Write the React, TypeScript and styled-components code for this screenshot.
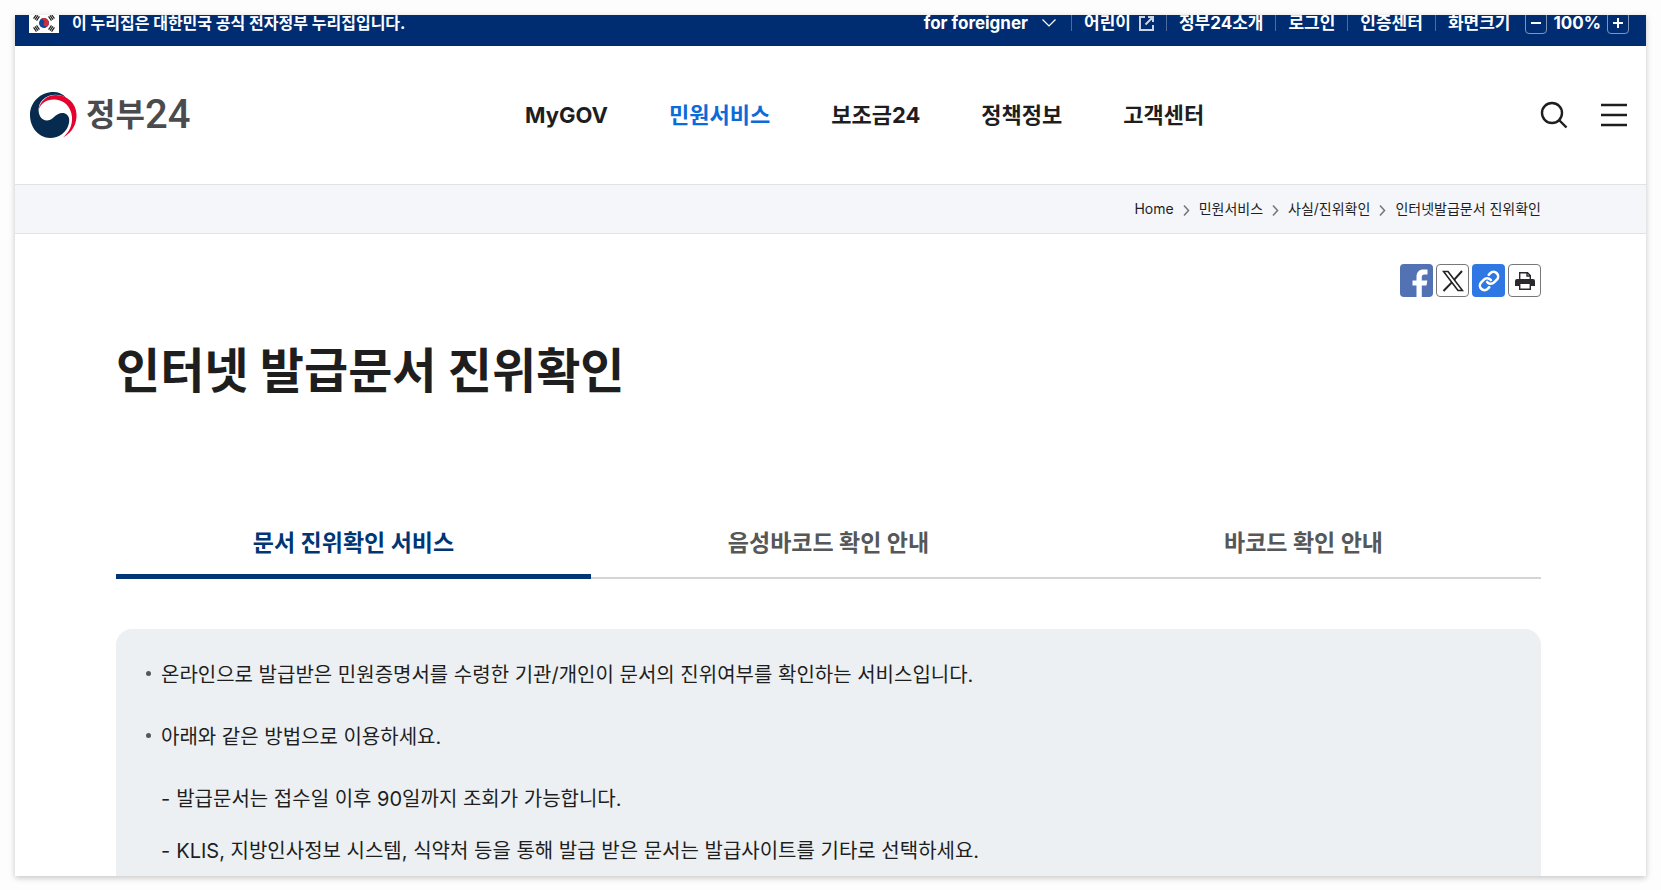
import React from "react";
import styled, { createGlobalStyle, css } from "styled-components";

const sans = `Inter, "Noto Sans CJK KR", sans-serif`;

const GlobalStyle = createGlobalStyle`
  *, *::before, *::after { box-sizing: border-box; }
  body { margin: 0; background: #fdfdfd; color: #1e1e1e; font-family: ${sans}; }
  a { color: inherit; text-decoration: none; }
  button { font: inherit; color: inherit; padding: 0; border: 0; background: none; cursor: pointer; }
  ul, ol, h1, p { margin: 0; padding: 0; list-style: none; }
  svg { display: block; flex: none; }
`;

const Page = styled.div`
  display: flex;
  min-height: 100vh;
  padding: 15px;
`;

const Frame = styled.div`
  flex: 1;
  min-width: 0;
  display: flex;
  flex-direction: column;
  background: #fff;
  box-shadow: 0 2px 6px rgba(0, 0, 0, 0.22);
`;

const TopBar = styled.div`
  height: 31px;
  overflow: hidden;
  display: flex;
  align-items: flex-end;
  background: #002d72;
  color: #fff;
`;

const TopBarInner = styled.div`
  flex: 1;
  height: 46px;
  flex-shrink: 0;
  padding: 0 17px 0 14px;
  display: flex;
  align-items: center;
  justify-content: space-between;
  font-size: 17px;
  line-height: 24px;
  font-weight: 700;
  white-space: nowrap;
`;

const Notice = styled.p`
  display: flex;
  align-items: center;
  gap: 13px;
  font-size: 16px;
`;

const Utilities = styled.ul`
  display: flex;
  align-items: center;
`;

const Utility = styled.li`
  display: flex;
  align-items: center;

  & + &::before {
    content: "";
    width: 1px;
    height: 16px;
    margin: 0 12px;
    background: #4d6c9c;
  }
`;

const UtilityLink = styled.a`
  display: flex;
  align-items: center;
  gap: 8px;
`;

const UtilityButton = styled.button`
  display: flex;
  align-items: center;
  gap: 14px;
  padding-right: 3px;
`;

const ZoomControls = styled.div`
  display: flex;
  align-items: center;
  gap: 6px;
  margin-left: 15px;
`;

const ZoomButton = styled.button`
  width: 22px;
  height: 22px;
  display: grid;
  place-items: center;
  border: 1px solid #8096b9;
  border-radius: 4px;
`;

const Header = styled.header`
  height: 138px;
  padding: 0 17px 0 15px;
  display: flex;
  align-items: center;
  justify-content: space-between;
`;

const Logo = styled.a`
  display: flex;
  align-items: center;
  gap: 9px;
  color: #4b4b4d;
`;

const LogoText = styled.span`
  display: flex;
  align-items: center;
  font-size: 32px;
  line-height: 48px;
  font-weight: 700;
`;

const LogoNumber = styled.span`
  font-family: Roboto, sans-serif;
  font-size: 40px;
  font-weight: 500;
`;

const Nav = styled.nav`
  display: flex;
  gap: 61px;
`;

const NavLink = styled.a<{ $active?: boolean }>`
  font-size: 22px;
  line-height: 32px;
  font-weight: 700;
  color: ${(p) => (p.$active ? "#0b6bd8" : "#1e1e1e")};
`;

const HeaderActions = styled.div`
  display: flex;
  gap: 30px;
`;

const IconButton = styled.button`
  width: 30px;
  height: 32px;
  display: grid;
  place-items: center;
`;

const BreadcrumbBar = styled.nav`
  height: 50px;
  border: solid #e1e3e6;
  border-width: 1px 0;
  background: #f4f6fa;
`;

const Breadcrumbs = styled.ol`
  height: 100%;
  padding-right: 105px;
  display: flex;
  align-items: center;
  justify-content: flex-end;
  gap: 9px;
  font-size: 14px;
  line-height: 20px;
`;

const Crumb = styled.li`
  display: flex;
  align-items: center;
  gap: 9px;
`;

const Main = styled.main`
  flex: 1;
  display: flex;
  flex-direction: column;
  padding: 30px 105px 0 101px;
`;

const ShareRow = styled.div`
  display: flex;
  justify-content: flex-end;
  gap: 3px;
`;

const ShareButton = styled.button<{ $fill?: string }>`
  width: 33px;
  height: 33px;
  display: grid;
  place-items: center;
  border-radius: 4px;
  overflow: hidden;
  ${(p) =>
    p.$fill
      ? css`
          background: ${p.$fill};
        `
      : css`
          border: 1px solid #77787a;
          background: #fff;
        `}
`;

const Title = styled.h1`
  margin-top: 44px;
  font-size: 48px;
  line-height: 60px;
  font-weight: 700;
`;

const Tabs = styled.div`
  display: flex;
  margin-top: 106px;
`;

const Tab = styled.button<{ $active?: boolean }>`
  flex: 1;
  height: 72px;
  font-size: 23px;
  line-height: 32px;
  font-weight: 700;
  color: ${(p) => (p.$active ? "#003675" : "#555759")};
  box-shadow: inset 0 ${(p) => (p.$active ? "-5px #003675" : "-2px #d3d5d7")};
`;

const InfoBox = styled.section`
  flex: 1;
  margin-top: 50px;
  padding: 31px 30px 10px;
  border-radius: 16px 16px 0 0;
  background: #ecf0f3;
  font-size: 20px;
  line-height: 30px;
`;

const InfoList = styled.ul`
  display: flex;
  flex-direction: column;
  gap: 32px;
`;

const InfoItem = styled.li`
  display: grid;
  grid-template-columns: 5px 1fr;
  column-gap: 10px;

  &::before {
    content: "";
    width: 5px;
    height: 5px;
    margin-top: 11px;
    border-radius: 50%;
    background: #555759;
  }
`;

const SubList = styled.ul`
  grid-column: 2;
  display: flex;
  flex-direction: column;
  gap: 22px;
  margin-top: 32px;
`;

const SubItem = styled.li`
  display: flex;
  gap: 6px;
`;

const Bars = ({ x, y, r }: { x: number; y: number; r: number }) => (
  <g transform={`translate(${x} ${y}) rotate(${r})`} stroke="#222" strokeWidth="1.2">
    <path d="M-2.6-1.800h5.200M-2.6 0h5.200M-2.6 1.800h5.200" />
  </g>
);

const KoreanFlag = () => (
  <svg width="30" height="20" viewBox="0 0 30 20" role="img" aria-label="태극기">
    <path fill="#fff" d="M0 0h30v20H0z" />
    <g transform="translate(15 10) rotate(25)">
      <circle r="5" fill="#0f4699" />
      <path d="M-5 0a5 5 0 0 1 10 0a2.5 2.5 0 0 1-5 0a2.5 2.5 0 0 0-5 0z" fill="#cd2e3a" />
    </g>
    <Bars x={7.5} y={4.5} r={-56} />
    <Bars x={22.5} y={4.5} r={56} />
    <Bars x={7.5} y={15.5} r={56} />
    <Bars x={22.5} y={15.5} r={-56} />
  </svg>
);

const GovMark = () => (
  <svg width="47" height="46" viewBox="0 0 47 46" aria-hidden="true">
    <path
      fill="#062b4f"
      d="M36 5.500C28 1 18 2.500 12.500 8C8 12.500 7.500 20 10.500 25c3 4.500 9 4.500 13 0.500c3.500-3.500 6.500-5 10-4.500c4.500 0.800 6.500 5 5.500 10c-1.800 9-10 15-19 15C8.500 45.500 0 35.500 0 23C0 10 10.500 0 23.500 0C28.500 0 33 2 36 5.500z"
    />
    <path
      fill="#e4032e"
      d="M8.500 18C10 9 17 3 26 3C38 3 46 12 46.500 22C47 32 42 41 33 45.500C39.500 40 42.500 33 42 25C41 14 33.500 8 25 7.500C17 7 11 11 8.500 18z"
    />
  </svg>
);

const ChevronDown = () => (
  <svg width="14" height="8" viewBox="0 0 14 8" fill="none" stroke="#fff" strokeWidth="1.2" aria-hidden="true">
    <path d="M.5.5 7 7 13.500.5" />
  </svg>
);

const ExternalIcon = () => (
  <svg width="15" height="15" viewBox="0 0 15 15" fill="none" stroke="#c9d4e4" strokeWidth="2" aria-hidden="true">
    <path d="M6 1H1v13h13V9M9 1h5v5M14 1 6.500 8.500" />
  </svg>
);

const CrumbArrow = () => (
  <svg width="7" height="16" viewBox="0 0 7 16" fill="none" stroke="#77787d" strokeWidth="1.6" aria-hidden="true">
    <path d="m1 4.500 4.500 5L1 14.500" />
  </svg>
);

const crumbs = ["Home", "민원서비스", "사실/진위확인", "인터넷발급문서 진위확인"];
const menu = ["MyGOV", "민원서비스", "보조금24", "정책정보", "고객센터"];
const tabs = ["문서 진위확인 서비스", "음성바코드 확인 안내", "바코드 확인 안내"];

export default function App() {
  return (
    <Page>
      <GlobalStyle />
      <Frame>
        <TopBar>
          <TopBarInner>
            <Notice>
              <KoreanFlag />
              이 누리집은 대한민국 공식 전자정부 누리집입니다.
            </Notice>
            <Utilities>
              <Utility>
                <UtilityButton type="button">
                  for foreigner
                  <ChevronDown />
                </UtilityButton>
              </Utility>
              <Utility>
                <UtilityLink href="#kids">
                  어린이
                  <ExternalIcon />
                </UtilityLink>
              </Utility>
              <Utility>
                <UtilityLink href="#about">정부24소개</UtilityLink>
              </Utility>
              <Utility>
                <UtilityLink href="#login">로그인</UtilityLink>
              </Utility>
              <Utility>
                <UtilityLink href="#cert">인증센터</UtilityLink>
              </Utility>
              <Utility>
                화면크기
                <ZoomControls>
                  <ZoomButton type="button" aria-label="화면 축소">
                    <svg width="12" height="12" stroke="#fff" strokeWidth="2" aria-hidden="true">
                      <path d="M1 6h10" />
                    </svg>
                  </ZoomButton>
                  100%
                  <ZoomButton type="button" aria-label="화면 확대">
                    <svg width="12" height="12" stroke="#fff" strokeWidth="2" aria-hidden="true">
                      <path d="M1 6h10M6 1v10" />
                    </svg>
                  </ZoomButton>
                </ZoomControls>
              </Utility>
            </Utilities>
          </TopBarInner>
        </TopBar>

        <Header>
          <Logo href="#home">
            <GovMark />
            <LogoText>
              정부<LogoNumber>24</LogoNumber>
            </LogoText>
          </Logo>
          <Nav aria-label="주 메뉴">
            {menu.map((label) => (
              <NavLink key={label} href="#menu" $active={label === "민원서비스"}>
                {label}
              </NavLink>
            ))}
          </Nav>
          <HeaderActions>
            <IconButton type="button" aria-label="검색">
              <svg width="28" height="28" viewBox="0 0 28 28" fill="none" stroke="#1e1e1e" strokeWidth="2.4" aria-hidden="true">
                <circle cx="12" cy="12" r="10" />
                <path d="m19 19 7.500 7.500" />
              </svg>
            </IconButton>
            <IconButton type="button" aria-label="전체메뉴">
              <svg width="26" height="24" viewBox="0 0 26 24" stroke="#1e1e1e" strokeWidth="2.4" aria-hidden="true">
                <path d="M0 2h26M0 12h26M0 22h26" />
              </svg>
            </IconButton>
          </HeaderActions>
        </Header>

        <BreadcrumbBar aria-label="현재 위치">
          <Breadcrumbs>
            {crumbs.map((label, i) => (
              <Crumb key={label}>
                {i > 0 && <CrumbArrow />}
                <a href="#crumb">{label}</a>
              </Crumb>
            ))}
          </Breadcrumbs>
        </BreadcrumbBar>

        <Main>
          <ShareRow>
            <ShareButton type="button" $fill="#5272b4" aria-label="페이스북 공유">
              <svg width="33" height="33" viewBox="0 0 33 33" aria-hidden="true">
                <path
                  fill="#fff"
                  d="M16.500 33V21.500H12.500V16.500h4V13c0-5 2.600-7.500 7-7.500h4v5h-3c-2 0-2.700.9-2.700 2.600v3.400h5.500l-.8 5h-4.700V33z"
                />
              </svg>
            </ShareButton>
            <ShareButton type="button" aria-label="X 공유">
              <svg width="22" height="22" viewBox="0 0 22 22" fill="none" stroke="#222" aria-hidden="true">
                <path strokeWidth="1.6" d="M1.500 1.500h4.500l14.500 19H16z" />
                <path strokeWidth="2" d="M20 1 12.300 9.600M9.600 12.600 1.500 21" />
              </svg>
            </ShareButton>
            <ShareButton type="button" $fill="#2f78e4" aria-label="링크 복사">
              <svg width="22" height="22" viewBox="0 0 24 24" fill="none" stroke="#fff" strokeWidth="2.8" strokeLinecap="round" aria-hidden="true">
                <path d="M10 13a5 5 0 0 0 7.540.54l3-3a5 5 0 0 0-7.070-7.070l-1.720 1.710" />
                <path d="M14 11a5 5 0 0 0-7.540-.54l-3 3a5 5 0 0 0 7.070 7.070l1.710-1.710" />
              </svg>
            </ShareButton>
            <ShareButton type="button" aria-label="인쇄">
              <svg width="20" height="20" viewBox="0 0 20 20" aria-hidden="true">
                <path fill="#2a2a2c" d="M2 8h16q2 0 2 2v5h-4v-2H4v2H0v-5q0-2 2-2z" />
                <path fill="none" stroke="#2a2a2c" strokeWidth="1.400" d="M4.700 8V1.700h7.800l2.800 2.800V8M12 1.700v3.300h3.300M4.700 13v5.300h10.600V13" />
              </svg>
            </ShareButton>
          </ShareRow>

          <Title>인터넷 발급문서 진위확인</Title>

          <Tabs role="tablist">
            {tabs.map((label, i) => (
              <Tab key={label} type="button" role="tab" aria-selected={i === 0} $active={i === 0}>
                {label}
              </Tab>
            ))}
          </Tabs>

          <InfoBox>
            <InfoList>
              <InfoItem>온라인으로 발급받은 민원증명서를 수령한 기관/개인이 문서의 진위여부를 확인하는 서비스입니다.</InfoItem>
              <InfoItem>
                아래와 같은 방법으로 이용하세요.
                <SubList>
                  <SubItem>
                    <span>-</span>발급문서는 접수일 이후 90일까지 조회가 가능합니다.
                  </SubItem>
                  <SubItem>
                    <span>-</span>KLIS, 지방인사정보 시스템, 식약처 등을 통해 발급 받은 문서는 발급사이트를 기타로 선택하세요.
                  </SubItem>
                </SubList>
              </InfoItem>
            </InfoList>
          </InfoBox>
        </Main>
      </Frame>
    </Page>
  );
}
